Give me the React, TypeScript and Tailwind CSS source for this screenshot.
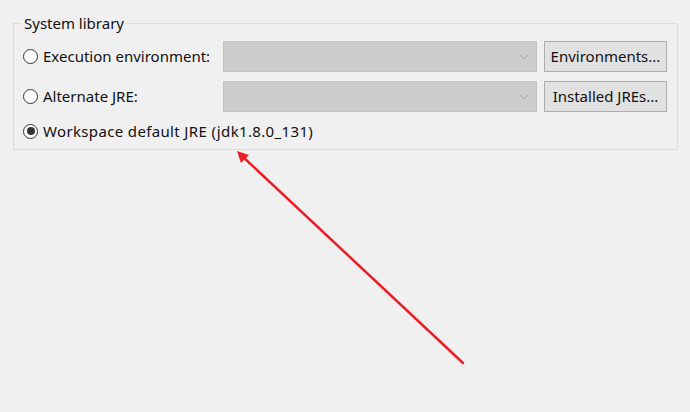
import React from "react"

const font = { fontFamily: '"Noto Sans", "Liberation Sans", sans-serif' }

function Radio({ checked }: { checked?: boolean }) {
  return (
    <span className="flex h-[15px] w-[15px] shrink-0 items-center justify-center rounded-full border border-[#333333] bg-white">
      {checked && <span className="h-[8px] w-[8px] rounded-full bg-[#333333]" />}
    </span>
  )
}

function Combo() {
  return (
    <div className="flex h-[31px] items-center justify-end border border-[#c4c4c4] bg-[#cccccc] pr-[7px]">
      <svg width="10" height="6" viewBox="0 0 10 6">
        <path d="M0.5 0.5 L5 5 L9.5 0.5" fill="none" stroke="#a8a8a8" strokeWidth="1" />
      </svg>
    </div>
  )
}

function Btn({ label }: { label: string }) {
  return (
    <div className="flex h-[31px] items-center justify-center border border-[#adadad] bg-[#e1e1e1] text-[15px] text-[#111]">
      {label}
    </div>
  )
}

export default function App() {
  const rows = [
    { label: "Execution environment:", button: "Environments..." },
    { label: "Alternate JRE:", button: "Installed JREs..." },
  ]

  return (
    <div className="relative h-[412px] w-[690px] overflow-hidden bg-[#f0f0f0] pt-[13px]" style={font}>
      <fieldset className="ml-[13px] w-[665px] border border-[#dcdcdc] pb-[8px] pl-[9px] pr-[10px]">
        <legend className="-ml-[1px] px-[2px] text-[15px] leading-[20px] text-[#111]">System library</legend>
        <div className="flex flex-col gap-[9px] pt-[8px]">
          {rows.map((r) => (
            <div key={r.label} className="grid grid-cols-[193px_314px_123px] items-center gap-[7px]">
              <div className="flex items-center gap-[5px] text-[15px] text-[#111]">
                <Radio />
                <span className="whitespace-nowrap">{r.label}</span>
              </div>
              <Combo />
              <Btn label={r.button} />
            </div>
          ))}
          <div className="flex h-[20px] items-center gap-[5px] text-[15px] text-[#111]">
            <Radio checked />
            <span className="tracking-[0.35px]">Workspace default JRE (jdk1.8.0_131)</span>
          </div>
        </div>
      </fieldset>

      {/* annotation arrow */}
      <svg className="pointer-events-none absolute left-0 top-0" width="690" height="412">
        <line x1="463" y1="363" x2="242" y2="156" stroke="#ee1c24" strokeWidth="2.5" strokeLinecap="round" />
        <path d="M237 151 L249 155 L241 163 Z" fill="#ee1c24" />
      </svg>
    </div>
  )
}
